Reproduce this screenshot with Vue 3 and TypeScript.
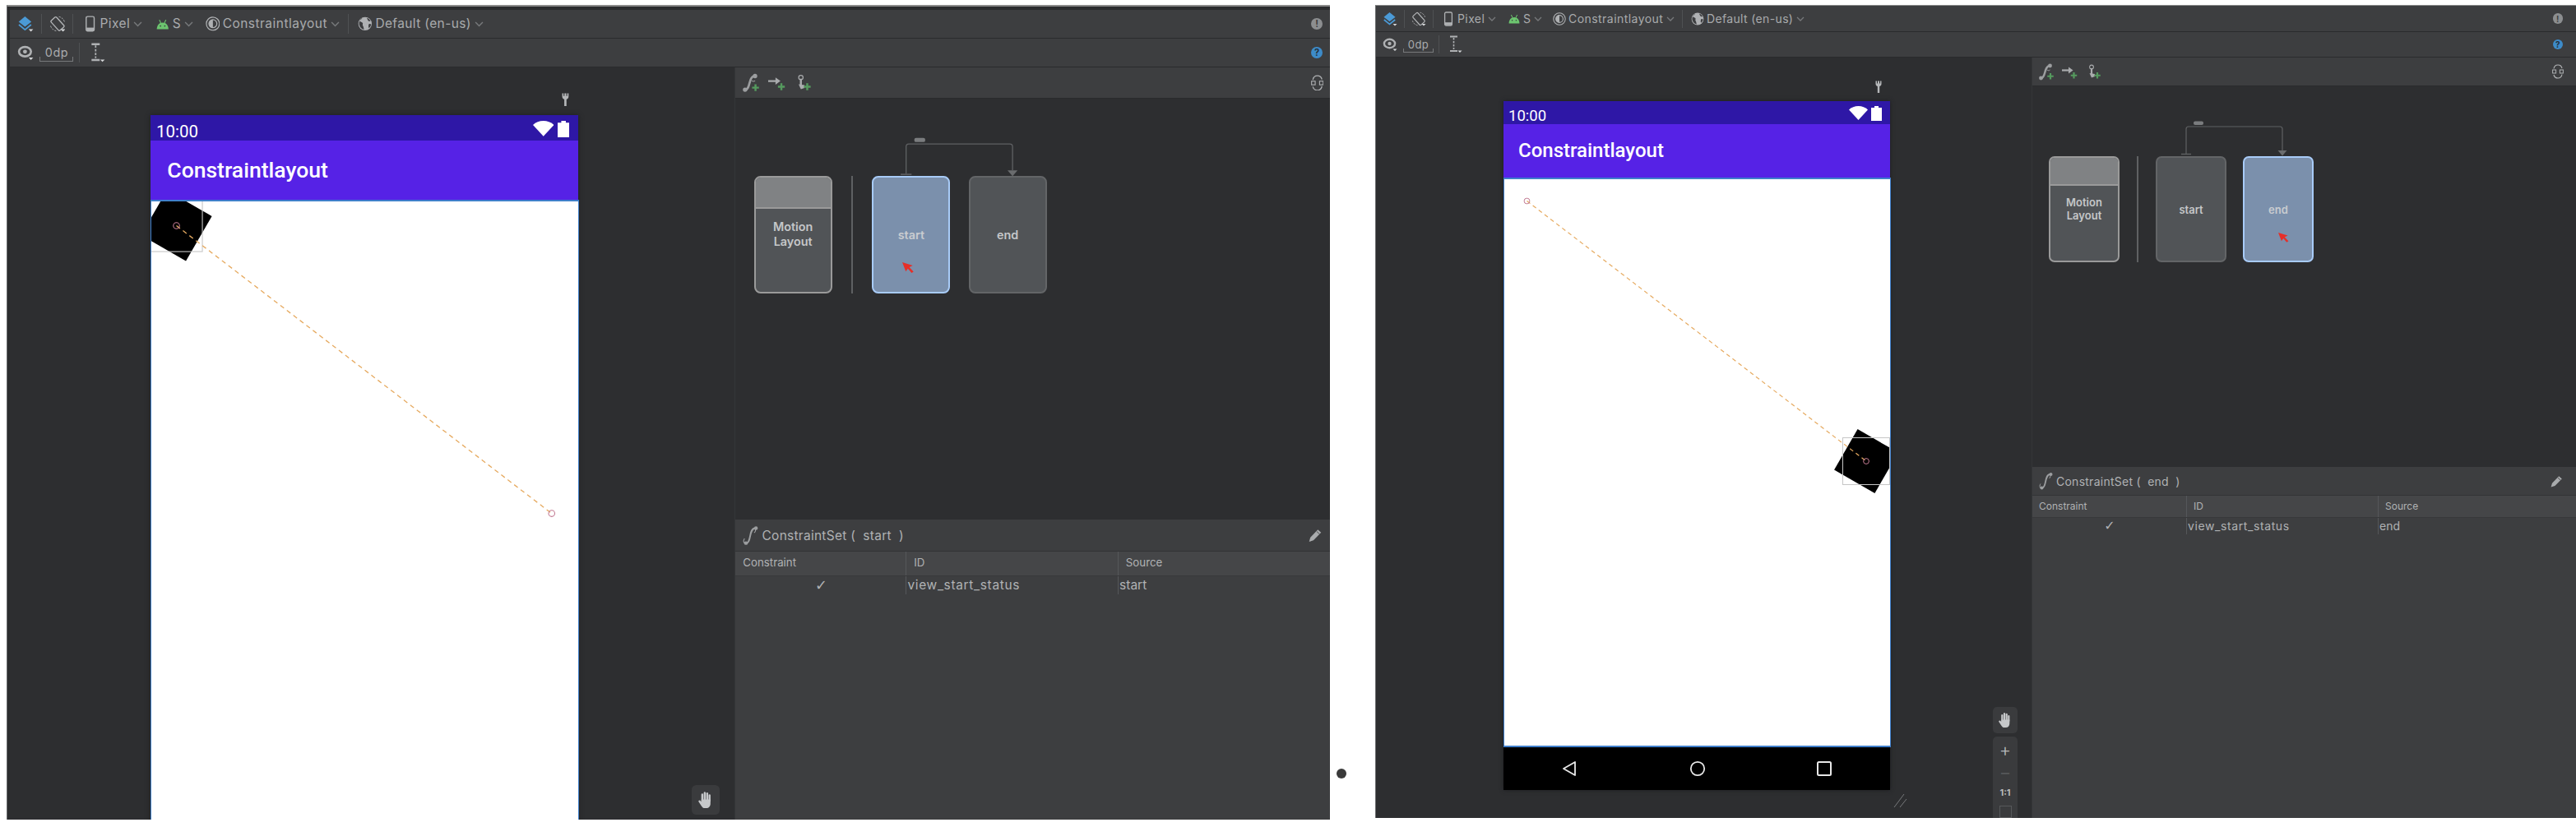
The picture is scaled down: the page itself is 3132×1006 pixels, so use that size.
<script setup lang="ts">
interface Panel {
  key: string;
  frame: string;
  selected: "start" | "end";
  cursor: { left: number; top: number };
  square: { cx: number; cy: number };
  zoomTools: boolean;
}

const panels: Panel[] = [
  {
    key: "a",
    frame: "frame-large",
    selected: "start",
    cursor: { left: 31, top: 93 },
    square: { cx: 28.5, cy: 28.5 },
    zoomTools: false,
  },
  {
    key: "b",
    frame: "frame-small",
    selected: "end",
    cursor: { left: 41, top: 91 },
    square: { cx: 441, cy: 345 },
    zoomTools: true,
  },
];

const states = ["start", "end"] as const;

function setTitle(name: string) {
  return `ConstraintSet (  ${name}  )`;
}
</script>

<template>
  <div class="page">
    <svg class="defs" aria-hidden="true">
      <defs>
        <symbol id="i-layers" viewBox="0 0 18 18">
          <path d="M8.5 1 15.5 6.8 8.5 12.3 1.5 6.8Z" fill="#4b9ad6" />
          <path d="M1.8 10 8.5 15.5 15.2 10" fill="none" stroke="#4b9ad6" stroke-width="1.7" />
          <path d="M12.5 15h5l-2.5 2.6z" fill="#d5d7d9" />
        </symbol>
        <symbol id="i-rotate" viewBox="0 0 18 18">
          <rect x="5" y="1.8" width="8" height="14.4" rx="1.4" transform="rotate(-42 9 9)" fill="none" stroke="#b4b6b8" stroke-width="1.2" />
          <path d="M10.5 1.2A8 8 0 0 1 16.8 7.6M7.5 16.8A8 8 0 0 1 1.2 10.4" fill="none" stroke="#b4b6b8" stroke-width=".9" stroke-dasharray="2 1.2" />
          <path d="M12.5 15h5l-2.5 2.6z" fill="#d5d7d9" />
        </symbol>
        <symbol id="i-phone" viewBox="0 0 12 18">
          <rect x="1.6" y="1" width="8.8" height="16" rx="1.6" fill="none" stroke="#afb1b3" stroke-width="1.3" />
          <rect x="2" y="13.2" width="8" height="3.4" fill="#afb1b3" />
        </symbol>
        <symbol id="i-android" viewBox="0 0 14 12">
          <path d="M.6 11.4C.6 7.2 3.2 4 7 4s6.4 3.2 6.4 7.4Z" fill="#6cc56f" />
          <path d="M3.4 1 5 4.6M10.6 1 9 4.6" stroke="#6cc56f" stroke-width="1" />
          <circle cx="4.6" cy="7.8" r=".8" fill="#3d3e40" />
          <circle cx="9.4" cy="7.8" r=".8" fill="#3d3e40" />
        </symbol>
        <symbol id="i-theme" viewBox="0 0 16 16">
          <circle cx="8" cy="8" r="7.2" fill="none" stroke="#afb1b3" stroke-width="1.1" />
          <circle cx="8" cy="8" r="4.4" fill="none" stroke="#afb1b3" stroke-width="1.1" />
          <path d="M8 3.6a4.4 4.4 0 0 0 0 8.8Z" fill="#afb1b3" />
        </symbol>
        <symbol id="i-globe" viewBox="0 0 16 16">
          <circle cx="8" cy="8" r="7.4" fill="#afb1b3" />
          <path d="M5 1.4C4.6 3 3 3.4 2 5c1 1.4 2.6 1 3.4 2.2.6 1-.6 1.8.2 3 .5.8 1 2.4 1.2 4.2-2.4-.4-5-2.8-5.4-6.2C1.2 5.4 3 2.6 5 1.4ZM10 1.6c1.6.4 3.2 1.8 4 3.4-1 .6-2.2.2-2.8-.8C10.8 3.4 10.2 2.6 10 1.6ZM12.4 8.2c.8-.2 1.6 0 2.2.4-.2 1.8-1 3.2-2.4 4.2-.6-1.4-.6-3.2.2-4.6Z" fill="#3d3e40" />
        </symbol>
        <symbol id="i-eye" viewBox="0 0 18 18">
          <ellipse cx="8.5" cy="8" rx="6.6" ry="5.2" fill="none" stroke="#afb1b3" stroke-width="2.4" />
          <circle cx="8.5" cy="8" r="2.2" fill="#afb1b3" />
          <path d="M12.5 14.5h5l-2.5 2.6z" fill="#d5d7d9" />
        </symbol>
        <symbol id="i-ibeam" viewBox="0 0 18 22">
          <path d="M3 1.5h9M3 19h9" stroke="#afb1b3" stroke-width="2.2" />
          <path d="M7.5 3v14" stroke="#afb1b3" stroke-width="1.6" stroke-dasharray="2.5 1.5" />
          <path d="M12.5 18.500h5l-2.5 2.6z" fill="#d5d7d9" />
        </symbol>
        <symbol id="i-set" viewBox="0 0 20 24">
          <path d="M5 20.500C10.500 20 7.500 4.500 14.500 4" fill="none" stroke="#9c9ea0" stroke-width="1.8" />
          <path d="M3 15.500C1.800 17 1.800 19.500 3 21M13.500 9c1.500-1 1.800-3 1-5" fill="none" stroke="#9c9ea0" stroke-width="1" />
          <circle cx="4.500" cy="20.500" r="2" fill="#9c9ea0" />
          <circle cx="15.500" cy="4" r="2" fill="#9c9ea0" />
        </symbol>
        <symbol id="i-set-add" viewBox="0 0 20 24">
          <path d="M4 20C9.500 19.500 7 5.500 14 5" fill="none" stroke="#9c9ea0" stroke-width="2.4" />
          <path d="M11 10c1 1 2.500 1 3.500 0" fill="none" stroke="#9c9ea0" stroke-width="1" />
          <circle cx="3.500" cy="20" r="2.400" fill="#9c9ea0" />
          <circle cx="14.500" cy="5" r="2.400" fill="#9c9ea0" />
          <path d="M15 14v7.500M11.250 17.750h7.500" stroke="#559a5e" stroke-width="2.2" />
        </symbol>
        <symbol id="i-arrow-add" viewBox="0 0 20 24">
          <path d="M0 10.500h9" stroke="#a9abad" stroke-width="2.2" />
          <path d="M8 6.500l5.500 4-5.500 4Z" fill="#a9abad" />
          <path d="M14.500 13v7.500M10.750 16.750h7.500" stroke="#559a5e" stroke-width="2.2" />
        </symbol>
        <symbol id="i-touch-add" viewBox="0 0 20 24">
          <circle cx="7" cy="6.500" r="2.400" fill="none" stroke="#a9abad" stroke-width="1.1" />
          <path d="M7 8v8" stroke="#a9abad" stroke-width="2.2" />
          <path d="M4.500 14 7 19.500l4-1.500v-3Z" fill="#a9abad" />
          <path d="M14 13v7.500M10.250 16.750h7.500" stroke="#559a5e" stroke-width="2.2" />
        </symbol>
        <symbol id="i-sync" viewBox="0 0 14 18">
          <path d="M2 5.500C2.500 2.800 4.600 1 7 1s4.500 1.800 5 4M12 12.500C11.500 15.200 9.400 17 7 17s-4.500-1.800-5-4" fill="none" stroke="#afb1b3" stroke-width="1.2" />
          <rect x=".6" y="7" width="4" height="4" fill="none" stroke="#afb1b3" stroke-width="1" />
          <rect x="9.400" y="7" width="4" height="4" fill="none" stroke="#afb1b3" stroke-width="1" />
        </symbol>
        <symbol id="i-pencil" viewBox="0 0 15 15">
          <path d="M.6 14.400 2 9.800 10.200 1.200l3.600 3.200L5.400 13Z" fill="#a9abad" />
          <path d="M9 3.200l3.300 3" stroke="#3d3e40" stroke-width=".8" />
        </symbol>
        <symbol id="i-hand" viewBox="0 0 18 20">
          <path d="M5.300 11V4M8 10V2.200M10.700 10V2.800M13.300 11V5" stroke="#c6c8ca" stroke-width="2.2" stroke-linecap="round" />
          <path d="M4.300 9.500h10V14c0 3-1.800 5-4.600 5H8c-1.700 0-2.600-.8-3.600-2.300L1.300 12c-.6-1 .8-2.100 1.800-1.200l1.200 1.200Z" fill="#c6c8ca" />
        </symbol>
        <symbol id="i-cursor" viewBox="0 0 13 12">
          <path d="M0 0 11.500 3.600 7.800 5.400 12.400 10.300 10.300 11.800 6.200 6.900 3.900 10.200Z" fill="#e62f28" />
        </symbol>
      </defs>
    </svg>

    <div v-for="panel in panels" :key="panel.key" class="frame" :class="panel.frame">
      <div class="editor">
        <header class="bar bar-top">
          <svg class="ic i18"><use href="#i-layers" /></svg>
          <i class="sep s1"></i>
          <svg class="ic i18 m8"><use href="#i-rotate" /></svg>
          <i class="sep s2"></i>
          <svg class="ic phone-ic"><use href="#i-phone" /></svg>
          <span class="label l-pixel">Pixel</span>
          <svg class="chev c-pixel" viewBox="0 0 10 6"><path d="M1 1l4 4 4-4" /></svg>
          <svg class="ic android-ic"><use href="#i-android" /></svg>
          <span class="label l-s">S</span>
          <svg class="chev c-s" viewBox="0 0 10 6"><path d="M1 1l4 4 4-4" /></svg>
          <svg class="ic theme-ic"><use href="#i-theme" /></svg>
          <span class="label l-theme">Constraintlayout</span>
          <svg class="chev c-theme" viewBox="0 0 10 6"><path d="M1 1l4 4 4-4" /></svg>
          <i class="sep s3"></i>
          <svg class="ic globe-ic"><use href="#i-globe" /></svg>
          <span class="label l-locale">Default (en-us)</span>
          <svg class="chev c-locale" viewBox="0 0 10 6"><path d="M1 1l4 4 4-4" /></svg>
          <span class="badge warn">!</span>
        </header>

        <header class="bar bar-sub">
          <svg class="ic i18"><use href="#i-eye" /></svg>
          <span class="dp">0dp</span>
          <i class="sep s4"></i>
          <svg class="ic ibeam-ic"><use href="#i-ibeam" /></svg>
          <span class="badge help">?</span>
        </header>

        <div class="body">
          <section class="canvas">
            <div class="device">
              <svg class="wrench" viewBox="0 0 8 15">
                <path d="M.5.500v3.500c0 1.800 1.200 2.800 2.300 3V15h2.400V7c1.100-.2 2.300-1.200 2.300-3V.500L6 .5v3H5V.500H3v3H2V.5Z" fill="#b5b7b9" />
              </svg>
              <div class="status">
                <span class="clock">10:00</span>
                <svg class="wifi" viewBox="0 0 23 17"><path d="M0 4.500C3 1.500 7 0 11.500 0S20 1.500 23 4.500L11.500 17Z" fill="#fff" /></svg>
                <svg class="battery" viewBox="0 0 13 18"><path d="M4 0h5v2h4v16H0V2h4Z" fill="#fff" /></svg>
              </div>
              <div class="appbar">Constraintlayout</div>
              <div class="stage">
                <svg class="scene">
                  <rect
                    :x="panel.square.cx - 28.5"
                    :y="panel.square.cy - 28.5"
                    width="57"
                    height="57"
                    fill="#000"
                    :transform="`rotate(30 ${panel.square.cx} ${panel.square.cy})`"
                  />
                  <rect
                    :x="panel.square.cx - 28.5"
                    :y="panel.square.cy - 28.5"
                    width="57"
                    height="57"
                    fill="none"
                    stroke="#c6c6c6"
                    stroke-width="1"
                  />
                  <path d="M28.5 28.5 441 345" stroke="#e6aa60" stroke-width="1.2" stroke-dasharray="5 4" />
                  <circle cx="28.5" cy="28.5" r="3.4" fill="none" stroke="#c27a92" stroke-width="1" />
                  <circle cx="441" cy="345" r="3.4" fill="none" stroke="#c27a92" stroke-width="1" />
                </svg>
              </div>
              <nav class="softkeys">
                <svg viewBox="0 0 18 20"><path d="M16 2 2 10l14 8Z" fill="none" stroke="#e8e8e8" stroke-width="1.8" stroke-linejoin="round" /></svg>
                <svg viewBox="0 0 20 20"><circle cx="10" cy="10" r="8.2" fill="none" stroke="#e8e8e8" stroke-width="1.8" /></svg>
                <svg viewBox="0 0 20 20"><rect x="2" y="2" width="16" height="16" rx="1.5" fill="none" stroke="#e8e8e8" stroke-width="2" /></svg>
              </nav>
              <svg class="grip" viewBox="0 0 18 18"><path d="M1 17 13 1M8 17l8-10" stroke="#77797b" stroke-width="1" /></svg>
            </div>
            <div class="float-tools">
              <div class="tool-box hand-box"><svg class="hand"><use href="#i-hand" /></svg></div>
              <div v-if="panel.zoomTools" class="tool-box zoom-box">
                <span class="zoom-plus">+</span>
                <span class="zoom-minus">−</span>
                <span class="zoom-one">1:1</span>
                <i class="zoom-fit"></i>
              </div>
            </div>
          </section>

          <aside class="side">
            <div class="side-bar">
              <svg class="ic add-ic"><use href="#i-set-add" /></svg>
              <svg class="ic add-ic"><use href="#i-arrow-add" /></svg>
              <svg class="ic add-ic"><use href="#i-touch-add" /></svg>
              <svg class="ic sync-ic"><use href="#i-sync" /></svg>
            </div>

            <div class="graph">
              <svg class="link" viewBox="0 0 330 46">
                <path d="M167 43V13q0-3 3-3h111q3 0 3 3v26" fill="none" stroke="#5f6163" stroke-width="1.2" />
                <path d="M161 43.5h12" stroke="#5f6163" stroke-width="1.4" />
                <path d="M278.5 39h11L284 45.5Z" fill="#6a6c6e" />
                <rect x="176" y="3.5" width="12" height="4.5" rx="2" fill="#7a7c7e" />
              </svg>
              <div class="card layout-card">
                <div class="band"></div>
                <div class="card-name">Motion<br />Layout</div>
              </div>
              <i class="rule"></i>
              <div
                v-for="state in states"
                :key="state"
                class="card state-card"
                :class="{ selected: state === panel.selected }"
              >
                {{ state }}
                <svg
                  v-if="state === panel.selected"
                  class="cursor"
                  :style="{ left: `${panel.cursor.left}px`, top: `${panel.cursor.top}px` }"
                ><use href="#i-cursor" /></svg>
              </div>
            </div>

            <div class="details">
              <div class="details-head">
                <svg class="ic set-ic"><use href="#i-set" /></svg>
                <span class="details-title">{{ setTitle(panel.selected) }}</span>
                <svg class="ic pencil-ic"><use href="#i-pencil" /></svg>
              </div>
              <div class="grid grid-head">
                <span>Constraint</span>
                <span>ID</span>
                <span>Source</span>
              </div>
              <div class="grid grid-row">
                <span class="check">✓</span>
                <span class="view-id">view_start_status</span>
                <span>{{ panel.selected }}</span>
              </div>
            </div>
          </aside>
        </div>
      </div>
    </div>

    <i class="dot"></i>
  </div>
</template>

<style scoped>
.page {
  position: relative;
  display: flex;
  width: 3132px;
  height: 1006px;
  overflow: hidden;
  background: #fff;
  font-family: Inter, "Liberation Sans", sans-serif;
}

.defs {
  position: absolute;
  width: 0;
  height: 0;
}

.frame {
  margin-top: 6px;
  border-left: 1px solid #66686a;
  background: #2b2c2e;
  overflow: hidden;
}

.frame-large {
  width: 1609px;
  height: 991px;
  margin-left: 8px;
  padding: 4px 0 0 3px;
  box-sizing: border-box;
  border-top: 2px solid #8a8a8a;
}

.frame-small {
  width: 1460px;
  height: 989px;
  margin-left: 55px;
  box-sizing: border-box;
  border-top: 1px solid #8a8a8a;
}

.editor {
  display: flex;
  flex-direction: column;
  height: 988px;
  overflow: hidden;
  background: #2d2e30;
}

.frame-large .editor {
  zoom: 1.106;
  width: 1451px;
  height: 891px;
  --edge: 14px;
}

.frame-small .editor {
  width: 1459px;
  --edge: 22px;
}

.bar {
  display: flex;
  flex: none;
  align-items: center;
  box-sizing: border-box;
  padding-left: 8px;
  background: #3d3e40;
  border-bottom: 1px solid #2a2b2d;
  padding-right: var(--edge);
}

.bar-top {
  height: 32px;
}

.bar-sub {
  height: 31px;
}

.ic {
  display: block;
  flex: none;
}

.i18 {
  width: 18px;
  height: 18px;
}

.m8 {
  margin-left: 8px;
}

.sep {
  display: block;
  flex: none;
  width: 1px;
  height: 22px;
  background: #4f5153;
}

.s1,
.s2 {
  margin-left: 8px;
}

.s3 {
  margin-left: 9px;
}

.s4 {
  margin-left: 6px;
}

.phone-ic {
  width: 12px;
  height: 18px;
  margin-left: 12px;
}

.android-ic {
  width: 14px;
  height: 12px;
  margin-left: 15px;
}

.theme-ic {
  width: 16px;
  height: 16px;
  margin-left: 13px;
}

.globe-ic {
  width: 16px;
  height: 16px;
  margin-left: 10px;
}

.label {
  flex: none;
  color: #a9abad;
  font-size: 14px;
  line-height: 1;
  white-space: nowrap;
}

.l-pixel {
  width: 33px;
  margin-left: 5px;
  letter-spacing: 0.4px;
}

.l-s {
  width: 8px;
  margin-left: 4px;
}

.l-theme {
  width: 115px;
  margin-left: 3px;
  letter-spacing: 0.45px;
}

.l-locale {
  width: 104px;
  margin-left: 3px;
  letter-spacing: 0.35px;
}

.chev {
  flex: none;
  width: 10px;
  height: 6px;
  fill: none;
  stroke: #77797b;
  stroke-width: 1.3;
}

.c-pixel,
.c-theme {
  margin-left: 4px;
}

.c-s,
.c-locale {
  margin-left: 5px;
}

.badge {
  display: flex;
  flex: none;
  align-items: center;
  justify-content: center;
  width: 12.5px;
  height: 12.5px;
  margin-right: -6px;
  margin-left: auto;
  border-radius: 50%;
  font-size: 10px;
  font-weight: 700;
  line-height: 1;
}

.warn {
  background: #8c8e90;
  color: #3d3e40;
}

.help {
  background: #3d8bc9;
  color: #23303c;
}

.dp {
  flex: none;
  box-sizing: border-box;
  width: 37px;
  height: 17px;
  margin: 2px 0 0 7px;
  border: 1px solid #77797b;
  border-top: 0;
  border-image: linear-gradient(to top, #77797b 5px, transparent 5px) 1;
  color: #a9abad;
  font-size: 13px;
  letter-spacing: 0.5px;
  line-height: 14px;
  text-align: center;
}

.ibeam-ic {
  width: 18px;
  height: 22px;
  margin-left: 10px;
}

.body {
  display: flex;
  flex: 1;
  min-height: 0;
}

.canvas {
  position: relative;
  box-sizing: border-box;
  flex: none;
  width: 798px;
  padding: 53px 0 0 155px;
}

.device {
  position: relative;
  display: flex;
  flex-direction: column;
  width: 470px;
  height: 838px;
  box-shadow: 0 0 5px #1d1e20;
}

.wrench {
  position: absolute;
  top: -25px;
  left: 452px;
  width: 8px;
  height: 15px;
}

.status {
  display: flex;
  flex: none;
  align-items: flex-start;
  box-sizing: border-box;
  height: 28px;
  padding: 6px 10px 0 6px;
  background: #2e17a6;
  color: #fff;
}

.clock {
  flex: 1;
  margin-top: 1px;
  font-family: Roboto, sans-serif;
  font-size: 18.5px;
  line-height: 22px;
}

.wifi {
  width: 23px;
  height: 17px;
}

.battery {
  width: 13px;
  height: 18px;
  margin-left: 4px;
}

.appbar {
  flex: none;
  box-sizing: border-box;
  height: 65px;
  padding-left: 18px;
  background: #5622e6;
  color: #fff;
  font-family: Roboto, sans-serif;
  font-size: 24px;
  font-weight: 500;
  line-height: 65px;
}

.stage {
  position: relative;
  flex: none;
  box-sizing: border-box;
  width: 471px;
  height: 693px;
  overflow: hidden;
  background: #fff;
  border: 1px solid #3f7fcb;
  border-bottom-width: 2px;
  border-top-width: 2px;
}

.scene {
  position: absolute;
  top: -2px;
  left: -1px;
  width: 470px;
  height: 693px;
}

.softkeys {
  display: grid;
  flex: none;
  grid-template-columns: 156px 156px 152px;
  align-items: center;
  justify-items: center;
  height: 52px;
  padding-left: 2px;
  background: #000;
}

.softkeys svg {
  width: 20px;
  height: 20px;
}

.grip {
  position: absolute;
  right: -22px;
  bottom: -22px;
  width: 18px;
  height: 18px;
}

.float-tools {
  position: absolute;
  top: 790px;
  left: 750px;
  display: flex;
  flex-direction: column;
  gap: 4px;
  width: 30px;
}

.tool-box {
  display: flex;
  flex-direction: column;
  align-items: center;
  border-radius: 5px;
  background: #3a3b3d;
}

.hand-box {
  justify-content: center;
  height: 32px;
}

.hand {
  width: 18px;
  height: 20px;
}

.zoom-box {
  height: 104px;
  color: #b8babc;
}

.zoom-plus {
  margin-top: 3px;
  font-size: 22px;
  font-weight: 300;
  line-height: 26px;
}

.zoom-minus {
  margin-top: 1px;
  color: #56585a;
  font-size: 22px;
  line-height: 26px;
}

.zoom-one {
  margin-top: 4px;
  font-size: 11px;
  font-weight: 700;
  line-height: 16px;
}

.zoom-fit {
  display: block;
  width: 13px;
  height: 13px;
  margin-top: 8px;
  border: 1px solid #56585a;
}

.side {
  display: flex;
  flex: 1;
  flex-direction: column;
  min-width: 0;
  border-left: 1px solid #343638;
  margin-left: -1px;
}

.side-bar {
  display: flex;
  flex: none;
  align-items: center;
  gap: 9px;
  box-sizing: border-box;
  height: 35px;
  padding: 0 var(--edge) 0 7px;
  background: #3d3e40;
  border-bottom: 1px solid #2a2b2d;
}

.add-ic {
  width: 20px;
  height: 24px;
}

.sync-ic {
  width: 14px;
  height: 18px;
  margin-right: -7px;
  margin-left: auto;
}

.pencil-ic {
  width: 15px;
  height: 15px;
  margin-right: -5.5px;
  margin-left: auto;
}

.graph {
  position: relative;
  display: flex;
  flex: none;
  gap: 20px;
  height: 129px;
  margin: 85px 0 0 20px;
}

.link {
  position: absolute;
  top: -46px;
  left: 0;
  width: 330px;
  height: 46px;
}

.card {
  position: relative;
  flex: none;
  box-sizing: border-box;
  width: 86px;
  height: 129px;
  border: 2px solid #636567;
  border-radius: 7px;
  background: #515457;
  color: #c5c7c9;
  font-size: 13px;
  font-weight: 600;
  text-align: center;
}

.layout-card {
  overflow: hidden;
  border-color: #9a9a9a;
}

.band {
  height: 32px;
  background: #808284;
  border-bottom: 2px solid #9a9a9a;
}

.card-name {
  padding-top: 12px;
  line-height: 16px;
}

.rule {
  display: block;
  flex: none;
  width: 2px;
  height: 129px;
  margin: 0 1px;
  background: #5f6163;
}

.state-card {
  display: flex;
  align-items: center;
  justify-content: center;
}

.selected {
  border-color: #a8cbf7;
  background: #7b90ac;
  color: #c9ccd0;
}

.cursor {
  position: absolute;
  width: 13px;
  height: 12px;
}

.details {
  display: flex;
  flex: 1;
  flex-direction: column;
  margin-top: 249px;
  background: #3d3e40;
  color: #b0b2b4;
}

.details-head {
  display: flex;
  flex: none;
  align-items: center;
  box-sizing: border-box;
  height: 35px;
  padding: 0 var(--edge) 0 7px;
  border-bottom: 1px solid #333436;
}

.set-ic {
  width: 20px;
  height: 24px;
}

.details-title {
  margin-left: 2px;
  font-size: 14px;
  letter-spacing: 0.25px;
  white-space: pre;
}

.grid {
  display: grid;
  flex: none;
  grid-template-columns: 187px 233px 1fr;
}

.grid span {
  box-sizing: border-box;
  border-left: 1px solid #55575a;
  white-space: nowrap;
}

.grid span:first-child {
  border-left: 0;
}

.grid-head {
  height: 26px;
  background: #454648;
  border-bottom: 1px solid #37383a;
  font-size: 12px;
  line-height: 25px;
}

.grid-head span {
  padding-left: 8px;
}

.grid-row {
  height: 20px;
  font-size: 14px;
  line-height: 20px;
}

.grid-row span {
  padding-left: 1px;
}

.grid-row .view-id {
  letter-spacing: 0.6px;
}

.grid-row .check {
  font-family: "DejaVu Sans", sans-serif;
  font-size: 16px;
  text-align: center;
}

.dot {
  position: absolute;
  top: 935px;
  left: 1625px;
  width: 12px;
  height: 12px;
  border-radius: 50%;
  background: #3a3a3a;
}
</style>
